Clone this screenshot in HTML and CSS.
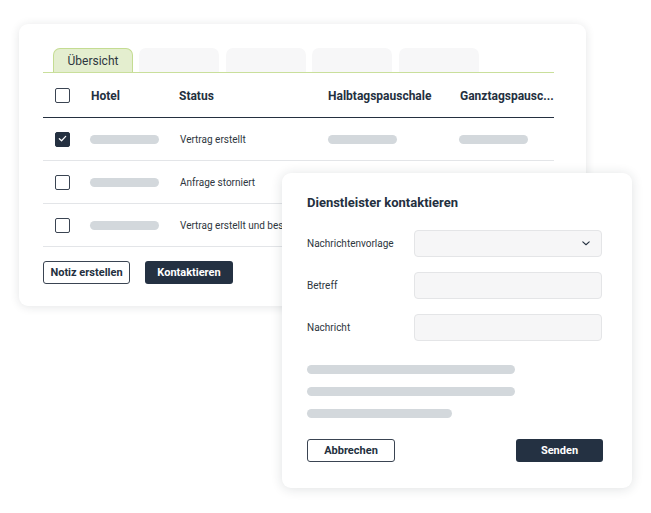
FILE: index.html
```html
<!DOCTYPE html>
<html lang="de">
<head>
<meta charset="utf-8">
<link rel="stylesheet" href="styles.css">
</head>
<body>
<div class="stage">
  <section class="card">
    <div class="tabs">
      <div class="tab active">Übersicht</div>
      <div class="tab"></div>
      <div class="tab"></div>
      <div class="tab"></div>
      <div class="tab"></div>
    </div>
    <div class="table">
      <div class="row head">
        <div class="cell"><span class="cb"></span></div>
        <div class="cell th">Hotel</div>
        <div class="cell th">Status</div>
        <div class="cell th">Halbtagspauschale</div>
        <div class="cell th">Ganztagspausc...</div>
      </div>
      <div class="row">
        <div class="cell"><span class="cb checked"><svg viewBox="0 0 16 16" width="15" height="15"><path d="M4.6 8.2 L7 10.4 L11.4 5.8" fill="none" stroke="#fff" stroke-width="1.3" stroke-linecap="round" stroke-linejoin="round"/></svg></span></div>
        <div class="cell"><span class="sk"></span></div>
        <div class="cell td">Vertrag erstellt</div>
        <div class="cell"><span class="sk"></span></div>
        <div class="cell"><span class="sk"></span></div>
      </div>
      <div class="row">
        <div class="cell"><span class="cb"></span></div>
        <div class="cell"><span class="sk"></span></div>
        <div class="cell td">Anfrage storniert</div>
        <div class="cell"></div>
        <div class="cell"></div>
      </div>
      <div class="row">
        <div class="cell"><span class="cb"></span></div>
        <div class="cell"><span class="sk"></span></div>
        <div class="cell td">Vertrag erstellt und bestätigt</div>
        <div class="cell"></div>
        <div class="cell"></div>
      </div>
    </div>
    <div class="actions">
      <button class="btn outline w87">Notiz erstellen</button>
      <button class="btn solid w88">Kontaktieren</button>
    </div>
  </section>

  <section class="dialog">
    <h2 class="title">Dienstleister kontaktieren</h2>
    <div class="form">
      <div class="frow">
        <span class="label">Nachrichtenvorlage</span>
        <div class="input select">
          <svg viewBox="0 0 10 6" width="8" height="5"><path d="M1 1 L5 4.6 L9 1" fill="none" stroke="#243040" stroke-width="1.4" stroke-linecap="round" stroke-linejoin="round"/></svg>
        </div>
      </div>
      <div class="frow">
        <span class="label">Betreff</span>
        <div class="input"></div>
      </div>
      <div class="frow">
        <span class="label">Nachricht</span>
        <div class="input"></div>
      </div>
    </div>
    <div class="lines">
      <span class="line"></span>
      <span class="line"></span>
      <span class="line short"></span>
    </div>
    <div class="dactions">
      <button class="btn outline w88">Abbrechen</button>
      <button class="btn solid w87">Senden</button>
    </div>
  </section>
</div>
</body>
</html>
```

FILE: styles.css
```css
* { box-sizing: border-box; }
html, body { margin: 0; padding: 0; background: #fff; }
body {
  font-family: Roboto, "Liberation Sans", Arial, sans-serif;
  color: #243040;
  width: 651px;
  height: 513px;
  overflow: hidden;
}
.stage {
  position: relative;
  width: 651px;
  height: 513px;
  padding: 24px 0 0 19px;
}
.card {
  width: 567px;
  height: 282px;
  background: #fff;
  border-radius: 9px;
  box-shadow: 0 1px 10px rgba(30, 40, 50, 0.12);
  padding: 24px 32px 0 24px;
}
.tabs {
  display: flex;
  gap: 6.4px;
  padding-left: 10px;
  border-bottom: 1px solid #c9df9b;
  height: 25px;
}
.tab {
  width: 80px;
  height: 24px;
  background: #f7f7f8;
  border-radius: 7px 7px 0 0;
}
.tab.active {
  background: #e4eecf;
  border: 1px solid #c4dc92;
  border-bottom: none;
  font-size: 12px;
  color: #2e3640;
  display: flex;
  align-items: center;
  justify-content: center;
  padding-top: 1px;
}
.table { display: flex; flex-direction: column; }
.row {
  display: grid;
  grid-template-columns: 47px 89px 149px 131px 95px;
  height: 43px;
  border-bottom: 1px solid #e3e5e8;
  align-items: center;
}
.row.head {
  height: 45px;
  border-bottom: 1.5px solid #243040;
  padding-top: 1px;
}
.cell {
  display: flex;
  align-items: center;
  white-space: nowrap;
}
.cell:first-child { padding-left: 12px; }
.th {
  font-size: 12px;
  font-weight: 700;
  color: #243040;
  padding-left: 1px;
}
.th:nth-child(3) { margin-left: -1px; }
.th:nth-child(4) { margin-left: -1px; }
.td {
  font-size: 10px;
  color: #2e3640;
  padding-left: 1px;
}
.cb {
  display: block;
  width: 15px;
  height: 15px;
  border: 1.3px solid #3a4452;
  border-radius: 2px;
  background: #fff;
}
.cb.checked {
  background: #243040;
  border-color: #243040;
  position: relative;
}
.cb.checked svg { position: absolute; left: -1.3px; top: -1.3px; }
.sk {
  display: block;
  width: 69px;
  height: 9px;
  border-radius: 5px;
  background: #d3d8dc;
}
.actions {
  display: flex;
  gap: 15px;
  margin-top: 14px;
}
.btn {
  height: 23px;
  border-radius: 3px;
  font-family: Roboto, "Liberation Sans", Arial, sans-serif;
  font-size: 11px;
  font-weight: 700;
  padding: 0;
  display: flex;
  align-items: center;
  justify-content: center;
}
.w87 { width: 87px; }
.w88 { width: 88px; }
.btn.outline {
  background: #fff;
  color: #243040;
  border: 1px solid #3a4452;
}
.btn.solid {
  background: #243142;
  color: #fff;
  border: none;
}
.dialog {
  position: absolute;
  left: 282px;
  top: 173px;
  width: 350px;
  height: 315px;
  background: #fff;
  border-radius: 9px;
  box-shadow: 0 1px 12px rgba(30, 40, 50, 0.14);
  padding: 22px 30px 0 25px;
}
.title {
  margin: 0;
  font-size: 13px;
  font-weight: 700;
  color: #243040;
  line-height: 16px;
}
.form {
  display: flex;
  flex-direction: column;
  gap: 15px;
  margin-top: 19px;
}
.frow {
  display: grid;
  grid-template-columns: 107px 188px;
  align-items: center;
}
.label {
  font-size: 10px;
  color: #2e3640;
}
.input {
  height: 27px;
  background: #f6f6f7;
  border: 1px solid #e4e5e7;
  border-radius: 4px;
}
.input.select {
  display: flex;
  align-items: center;
  justify-content: flex-end;
  padding-right: 11px;
}
.lines {
  display: flex;
  flex-direction: column;
  gap: 13px;
  margin-top: 24px;
}
.line {
  display: block;
  width: 208px;
  height: 9px;
  border-radius: 5px;
  background: #d3d8dc;
}
.line.short { width: 145px; }
.dactions {
  display: flex;
  justify-content: space-between;
  margin-top: 21px;
  width: 296px;
}
```
